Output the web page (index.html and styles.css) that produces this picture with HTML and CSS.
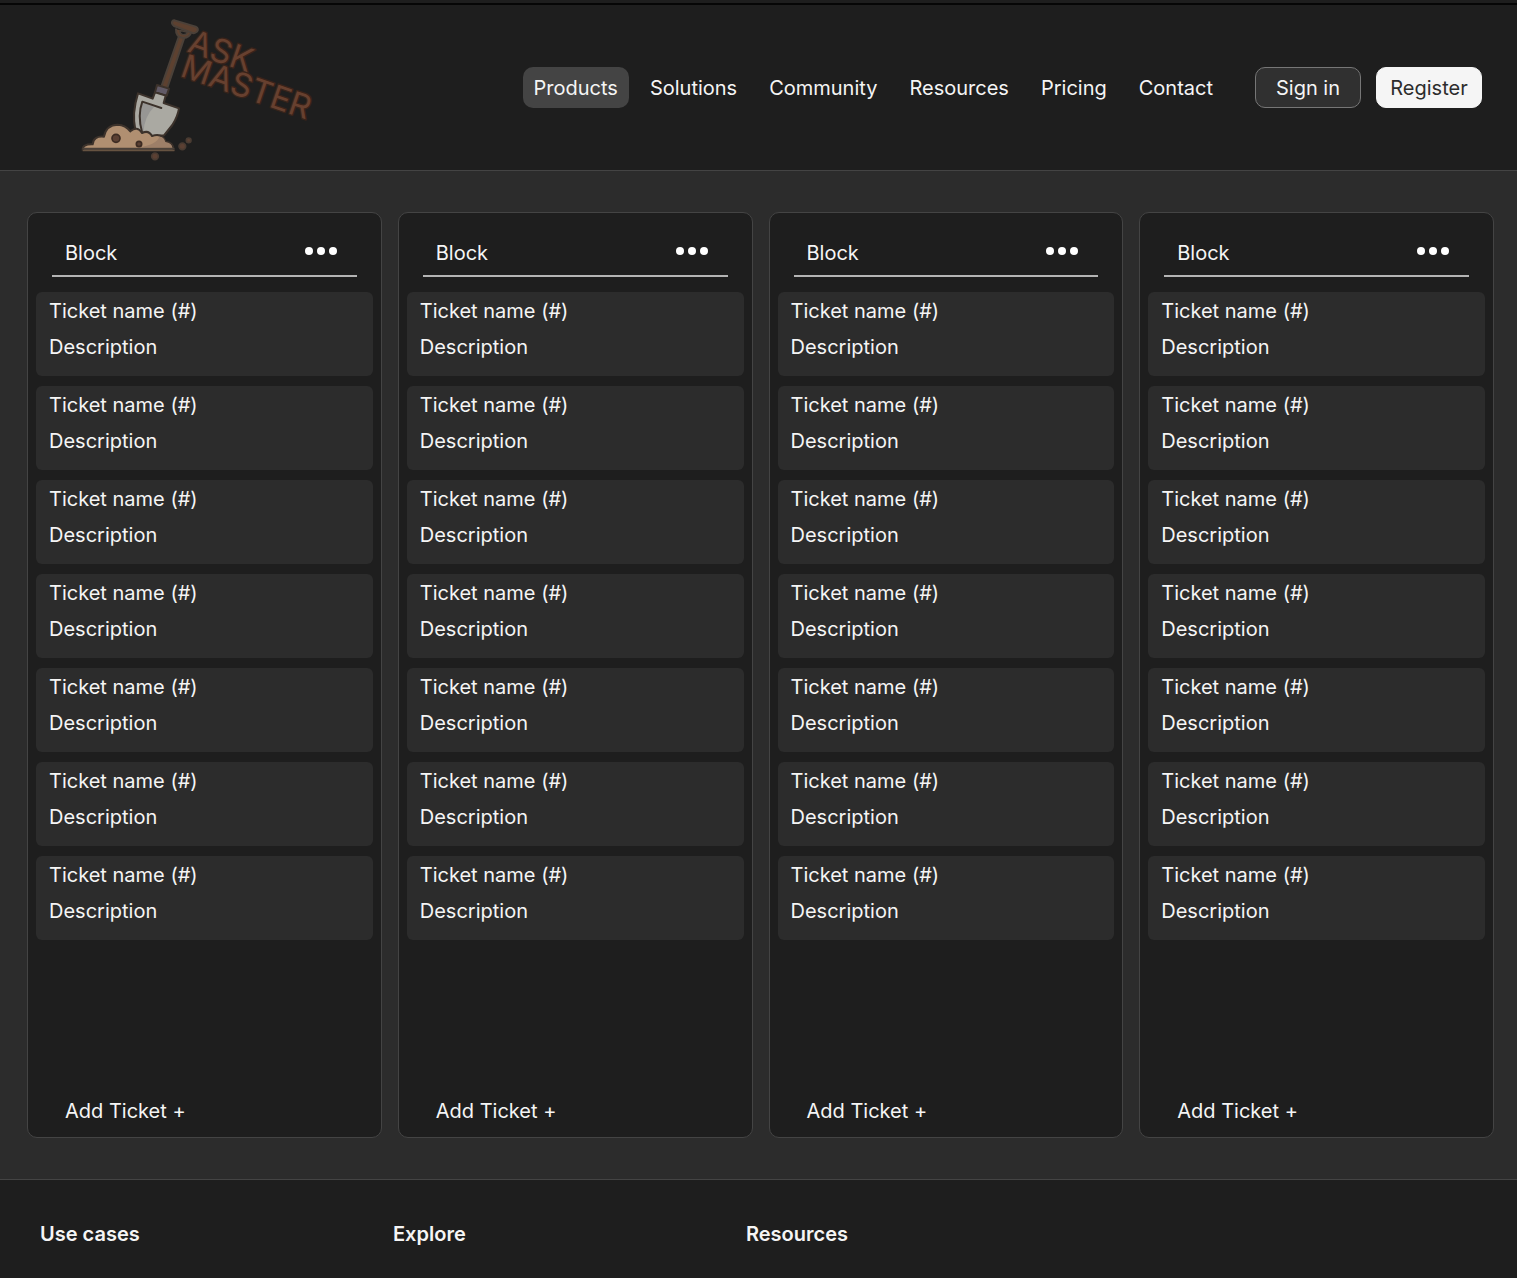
FILE: index.html
```html
<!DOCTYPE html>
<html lang="en">
<head>
<meta charset="utf-8">
<meta name="viewport" content="width=device-width, initial-scale=1">
<title>Task Master</title>
<link rel="stylesheet" href="styles.css">
</head>
<body>
<div class="frame">
  <header class="header">
    <a class="logo" href="#" aria-label="Task Master">
      <svg class="logo-art" viewBox="0 36 780 450" aria-hidden="true">
        <g stroke="#4b4139" stroke-linejoin="round" stroke-linecap="round">
          <!-- shovel handle -->
          <path d="M327 108 L343 113 L291 266 L274 260 Z" fill="#5d4130" stroke-width="6"/>
          <path d="M318 88 Q317 112 340 114 Q359 113 364 96" fill="#5d4130" stroke-width="6"/>
          <path d="M329 91 Q330 103 341 104 Q349 104 353 97 Z" fill="#1e1e1e" stroke-width="4"/>
          <path d="M314 61 L377 80 Q388 86 381 95 Q374 102 365 98 L312 78 Q303 71 307 64 Q310 60 314 61 Z" fill="#5d4130" stroke-width="6"/>
          <!-- blade -->
          <g stroke="#3c322b" stroke-width="6">
            <path d="M261 255 L297 266 L290 287 L255 277 Z" fill="#615a66"/>
            <path d="M204 280 L248 296 L255 277 L287 287 L281 309 L327 325 Q323 350 307 375 L282 406 L240 410 L196 390 Q185 340 204 280 Z" fill="#aaa9a2"/>
            <path d="M218 306 Q198 350 214 395 L220 400 Q222 350 252 321 Z" fill="#979694" stroke="none"/>
            <path d="M216 396 Q202 345 217 305 L274 324" fill="none"/>
          </g>
          <!-- soil -->
          <path d="M38 451 Q36 432 68 433 Q70 407 102 410 Q108 375 143 374 Q167 375 181 394 Q202 376 216 399 Q236 389 246 408 Q276 397 287 425 Q309 426 312 451 Z" fill="#b08f71" stroke="#3c322b" stroke-width="6"/>
          <path d="M205 442 Q260 434 268 410 Q282 410 286 426 Q306 430 307 443 Z" fill="#9d7f68" stroke="none"/>
          <path d="M40 446 H311" fill="none" stroke-width="5"/>
          <path d="M40 452 H312" fill="none" stroke="#6f5947" stroke-width="3"/>
          <g fill="#5b4033" stroke="#3c2b22" stroke-width="5">
            <circle cx="138" cy="415" r="12"/>
            <circle cx="207" cy="432" r="8"/>
            <circle cx="255" cy="469" r="10" stroke="#493b32"/>
            <circle cx="337" cy="439" r="10" stroke="#493b32"/>
            <circle cx="356" cy="421" r="7" stroke="#493b32"/>
          </g>
        </g>
        <g class="wordmark">
          <text transform="translate(349 154) rotate(19)">ASK</text>
          <text transform="translate(327 227) rotate(19)">MASTER</text>
        </g>
      </svg>
    </a>
    <nav class="nav" aria-label="Main">
      <a class="nav-link active" href="#">Products</a>
      <a class="nav-link" href="#">Solutions</a>
      <a class="nav-link" href="#">Community</a>
      <a class="nav-link" href="#">Resources</a>
      <a class="nav-link" href="#">Pricing</a>
      <a class="nav-link" href="#">Contact</a>
    </nav>
    <div class="auth">
      <button class="btn" type="button">Sign in</button>
      <button class="btn btn-light" type="button">Register</button>
    </div>
  </header>

  <main class="board">
    <section class="column">
      <div class="column-head">
        <h2 class="column-title">Block</h2>
        <button class="more" type="button" aria-label="Block options"><i class="dot"></i><i class="dot"></i><i class="dot"></i></button>
      </div>
      <ul class="tickets">
        <li class="ticket"><h3>Ticket name (#)</h3><p>Description</p></li>
        <li class="ticket"><h3>Ticket name (#)</h3><p>Description</p></li>
        <li class="ticket"><h3>Ticket name (#)</h3><p>Description</p></li>
        <li class="ticket"><h3>Ticket name (#)</h3><p>Description</p></li>
        <li class="ticket"><h3>Ticket name (#)</h3><p>Description</p></li>
        <li class="ticket"><h3>Ticket name (#)</h3><p>Description</p></li>
        <li class="ticket"><h3>Ticket name (#)</h3><p>Description</p></li>
      </ul>
      <button class="add" type="button">Add Ticket +</button>
    </section>
    <section class="column">
      <div class="column-head">
        <h2 class="column-title">Block</h2>
        <button class="more" type="button" aria-label="Block options"><i class="dot"></i><i class="dot"></i><i class="dot"></i></button>
      </div>
      <ul class="tickets">
        <li class="ticket"><h3>Ticket name (#)</h3><p>Description</p></li>
        <li class="ticket"><h3>Ticket name (#)</h3><p>Description</p></li>
        <li class="ticket"><h3>Ticket name (#)</h3><p>Description</p></li>
        <li class="ticket"><h3>Ticket name (#)</h3><p>Description</p></li>
        <li class="ticket"><h3>Ticket name (#)</h3><p>Description</p></li>
        <li class="ticket"><h3>Ticket name (#)</h3><p>Description</p></li>
        <li class="ticket"><h3>Ticket name (#)</h3><p>Description</p></li>
      </ul>
      <button class="add" type="button">Add Ticket +</button>
    </section>
    <section class="column">
      <div class="column-head">
        <h2 class="column-title">Block</h2>
        <button class="more" type="button" aria-label="Block options"><i class="dot"></i><i class="dot"></i><i class="dot"></i></button>
      </div>
      <ul class="tickets">
        <li class="ticket"><h3>Ticket name (#)</h3><p>Description</p></li>
        <li class="ticket"><h3>Ticket name (#)</h3><p>Description</p></li>
        <li class="ticket"><h3>Ticket name (#)</h3><p>Description</p></li>
        <li class="ticket"><h3>Ticket name (#)</h3><p>Description</p></li>
        <li class="ticket"><h3>Ticket name (#)</h3><p>Description</p></li>
        <li class="ticket"><h3>Ticket name (#)</h3><p>Description</p></li>
        <li class="ticket"><h3>Ticket name (#)</h3><p>Description</p></li>
      </ul>
      <button class="add" type="button">Add Ticket +</button>
    </section>
    <section class="column">
      <div class="column-head">
        <h2 class="column-title">Block</h2>
        <button class="more" type="button" aria-label="Block options"><i class="dot"></i><i class="dot"></i><i class="dot"></i></button>
      </div>
      <ul class="tickets">
        <li class="ticket"><h3>Ticket name (#)</h3><p>Description</p></li>
        <li class="ticket"><h3>Ticket name (#)</h3><p>Description</p></li>
        <li class="ticket"><h3>Ticket name (#)</h3><p>Description</p></li>
        <li class="ticket"><h3>Ticket name (#)</h3><p>Description</p></li>
        <li class="ticket"><h3>Ticket name (#)</h3><p>Description</p></li>
        <li class="ticket"><h3>Ticket name (#)</h3><p>Description</p></li>
        <li class="ticket"><h3>Ticket name (#)</h3><p>Description</p></li>
      </ul>
      <button class="add" type="button">Add Ticket +</button>
    </section>
  </main>

  <footer class="footer">
    <h2 class="footer-title">Use cases</h2>
    <h2 class="footer-title">Explore</h2>
    <h2 class="footer-title">Resources</h2>
  </footer>
</div>
</body>
</html>
```
FILE: styles.css
```css
* {
  box-sizing: border-box;
  margin: 0;
  padding: 0;
}

body {
  background: #1e1e1e;
  color: #f5f5f5;
  font: 400 20px/28px Inter, "Liberation Sans", sans-serif;
  padding-top: 3px;
}

button {
  font: inherit;
  color: inherit;
  background: none;
  border: 0;
  cursor: pointer;
}

h2, h3 {
  font: inherit;
}

ul {
  list-style: none;
}

.frame {
  border-top: 2px solid #060606;
}

/* Header */

.header {
  display: flex;
  align-items: center;
  min-height: 166px;
  padding: 7px 35px 8px 70px;
  border-bottom: 1px solid #444;
}

.logo {
  display: block;
  margin-right: auto;
}

.logo-art {
  display: block;
  width: 260px;
  height: 150px;
}

.wordmark {
  font-family: Inter, "Liberation Sans", sans-serif;
  font-size: 98px;
  font-weight: 400;
  fill: #67402f;
  stroke: #38231a;
  stroke-width: 8px;
  stroke-linejoin: round;
  paint-order: stroke;
}

.nav {
  display: flex;
  gap: 10px;
}

.nav-link {
  padding: 7px 11px 6px;
  border-radius: 10px;
  color: #f5f5f5;
  text-decoration: none;
}

.nav-link.active {
  background: #444;
}

.auth {
  display: flex;
  gap: 15px;
  margin-left: 31px;
}

.btn {
  width: 106px;
  height: 41px;
  padding-top: 1px;
  border: 1px solid #767676;
  border-radius: 10px;
  background: #303030;
}

.btn-light {
  border-color: #f5f5f5;
  background: #f5f5f5;
  color: #2c2c2c;
}

/* Board */

.board {
  display: grid;
  grid-template-columns: repeat(4, 1fr);
  gap: 16px;
  padding: 41px 23px 41px 27px;
  background: #2c2c2c;
}

.column {
  display: flex;
  flex-direction: column;
  min-height: 926px;
  padding: 0 8px 12px;
  border: 1px solid #444;
  border-radius: 10px;
  background: #1e1e1e;
}

.column-head {
  display: flex;
  justify-content: space-between;
  align-items: center;
  margin: 0 16px 15px;
  padding: 26px 20px 8px 13px;
  border-bottom: 2px solid #b4b4b4;
}

.more {
  display: flex;
  gap: 4px;
  padding: 4px 0 8px;
}

.dot {
  width: 8px;
  height: 8px;
  border-radius: 50%;
  background: #fff;
}

.tickets {
  display: grid;
  gap: 10px;
}

.ticket {
  padding: 5px 13px 15px;
  border-radius: 6px;
  background: #2c2c2c;
}

.ticket h3 {
  margin-bottom: 8px;
}

.add {
  align-self: flex-start;
  margin: auto 0 0 29px;
}

/* Footer */

.footer {
  display: grid;
  grid-template-columns: repeat(4, 1fr);
  padding: 40px 65px 30px 40px;
  border-top: 1px solid #444;
}

.footer-title {
  font-weight: 600;
}
```
